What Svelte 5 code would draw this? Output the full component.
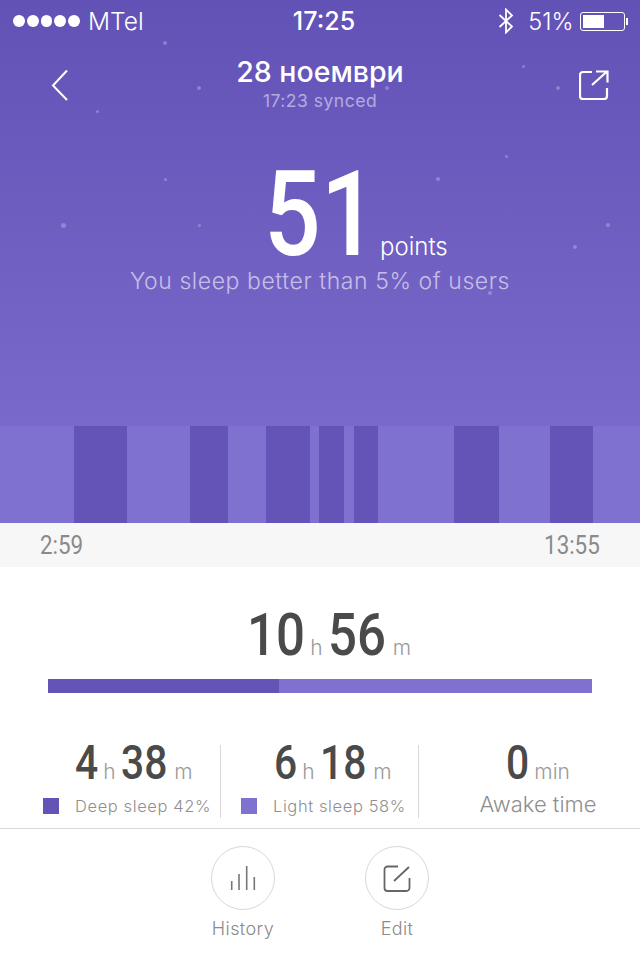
<script>
  const stars = [
    [165, 43, 2], [199, 88, 2], [97, 111, 1.5], [523, 66, 1.5], [558, 88, 2], [387, 88, 2],
    [165, 179, 1.5], [438, 179, 2], [506, 156, 1.5], [63, 225, 2.5], [199, 225, 1.5],
    [608, 225, 2], [575, 247, 2], [490, 293, 2]
  ];

  const segments = [
    ['light', 74], ['deep', 53], ['light', 63], ['deep', 38], ['light', 38], ['deep', 44],
    ['light', 9], ['deep', 25], ['light', 10], ['deep', 24], ['light', 76], ['deep', 45],
    ['light', 51], ['deep', 43], ['light', 47]
  ];
</script>

<div class="page">
  <section class="hero">
    {#each stars as [x, y, r]}
      <span class="star" style="left:{x - r}px;top:{y - r}px;width:{r * 2}px;height:{r * 2}px"></span>
    {/each}

    <div class="status">
      <div class="carrier">
        <span class="signal">
          {#each [1, 2, 3, 4, 5] as dot}
            <i data-dot={dot}></i>
          {/each}
        </span>
        <span>MTel</span>
      </div>
      <div class="clock">17:25</div>
      <div class="power">
        <svg class="bt" width="16" height="26" viewBox="0 0 16 26" fill="none" stroke="#fff" stroke-width="1.8">
          <path d="M1.5 7 14 18.500 8 24.500V1.500l6 6L1.500 19" />
        </svg>
        <span>51%</span>
        <span class="battery"><b></b></span>
        <span class="nub"></span>
      </div>
    </div>

    <header class="nav">
      <svg class="back" width="18" height="32" viewBox="0 0 18 32" fill="none" stroke="#fff" stroke-width="2">
        <path d="M16 1.500 2 16.500 16 31" />
      </svg>
      <div class="title">
        <h1>28 ноември</h1>
        <p>17:23 synced</p>
      </div>
      <svg class="share" width="30" height="30" viewBox="0 0 30 30" fill="none" stroke="#fff" stroke-width="2.2">
        <path d="M13 2H4a3 3 0 0 0-3 3v21a3 3 0 0 0 3 3h21a3 3 0 0 0 3-3v-8" />
        <path d="M13 15 28 1.500M17 1.500h11.500v11" />
      </svg>
    </header>

    <div class="score">
      <span class="points">51</span>
      <span class="unit">points</span>
    </div>
    <p class="rank">You sleep better than 5% of users</p>
  </section>

  <div class="strip">
    {#each segments as [kind, width]}
      <span class={kind} style="width:{width}px"></span>
    {/each}
  </div>

  <div class="times">
    <span class="start">2:59</span>
    <span class="end">13:55</span>
  </div>

  <section class="total">
    <div class="duration big">
      <b class="two">10</b><small>h</small><b class="two">56</b><small>m</small>
    </div>
    <div class="ratio">
      <span class="deep" style="width:42.5%"></span>
      <span class="light" style="width:57.5%"></span>
    </div>
  </section>

  <section class="stats">
    <div class="stat first">
      <div class="duration"><b class="one">4</b><small>h</small><b class="two">38</b><small>m</small></div>
      <div class="legend"><span class="swatch deep"></span>Deep sleep 42%</div>
    </div>
    <div class="stat second">
      <div class="duration"><b class="one">6</b><small>h</small><b class="two">18</b><small>m</small></div>
      <div class="legend"><span class="swatch light"></span>Light sleep 58%</div>
    </div>
    <div class="stat third">
      <div class="duration"><b class="one">0</b><small>min</small></div>
      <div class="awake">Awake time</div>
    </div>
  </section>

  <footer class="actions">
    <div class="action">
      <span class="circle">
        <svg width="26" height="24" viewBox="0 0 26 24" fill="none" stroke="#777" stroke-width="1.600">
          <path d="M1.700 15v9M9 8v16M16.700 0v24M24.300 11v13" />
        </svg>
      </span>
      <span class="label">History</span>
    </div>
    <div class="action">
      <span class="circle">
        <svg width="28" height="28" viewBox="0 0 28 28" fill="none" stroke="#666" stroke-width="1.800">
          <path d="M15 2.500H4.500a3 3 0 0 0-3 3V24a3 3 0 0 0 3 3h19a3 3 0 0 0 3-3V14" />
          <path d="M11 17 26 3" />
        </svg>
      </span>
      <span class="label">Edit</span>
    </div>
  </footer>
</div>

<style>
  :global(body) {
    background: #fff;
    font-family: Inter, Roboto, sans-serif;
  }

  .page {
    width: 640px;
    height: 960px;
    overflow: hidden;
  }

  .hero {
    position: relative;
    height: 426px;
    background: linear-gradient(#6352b6, #7969ca);
    color: #fff;
  }

  .star {
    position: absolute;
    border-radius: 50%;
    background: rgba(255, 255, 255, 0.25);
  }

  .status {
    display: grid;
    grid-template-columns: 1fr auto 1fr;
    align-items: center;
    height: 40px;
    padding: 1px 0 0 8px;
    font-size: 23.500px;
    font-weight: 300;
  }

  .carrier {
    display: flex;
    align-items: center;
    gap: 8px;
    margin-left: 5px;
    font-size: 24.500px;
  }

  .signal {
    display: flex;
    gap: 2px;
  }

  .signal i {
    width: 11.800px;
    height: 11.800px;
    border-radius: 50%;
    background: #fff;
  }

  .clock {
    font-size: 25px;
    font-weight: 500;
  }

  .power {
    display: flex;
    align-items: center;
    justify-content: flex-end;
    padding-right: 12px;
  }

  .bt {
    margin-right: 14px;
  }

  .battery {
    margin-left: 6px;
    width: 45px;
    height: 19px;
    padding: 2px;
    box-sizing: border-box;
    border: 1px solid #fff;
    border-radius: 3px;
  }

  .battery b {
    display: block;
    width: 21px;
    height: 100%;
    background: #fff;
  }

  .nub {
    width: 2.500px;
    height: 7px;
    margin-left: 1px;
    background: #fff;
  }

  .nav {
    display: grid;
    grid-template-columns: 1fr auto 1fr;
    align-items: start;
    padding: 13px 31px 0;
  }

  .back {
    margin: 15px 0 0 20px;
  }

  .share {
    margin-top: 16px;
    justify-self: end;
  }

  .title {
    text-align: center;
  }

  .title h1 {
    margin: 0;
    font-size: 28.500px;
    font-weight: 500;
    line-height: 36px;
  }

  .title p {
    margin: 0;
    font-size: 17.500px;
    line-height: 22px;
    letter-spacing: 0.5px;
    color: rgba(255, 255, 255, 0.5);
  }

  .score {
    display: flex;
    align-items: baseline;
    margin-top: 51px;
    padding-left: 264px;
    height: 104px;
  }

  .points {
    display: inline-block;
    width: 116px;
    font-family: Roboto, sans-serif;
    font-size: 119px;
    font-weight: 500;
    line-height: 104px;
    transform: scaleX(0.84);
    transform-origin: left center;
  }

  .unit {
    font-size: 24px;
    font-weight: 300;
  }

  .rank {
    margin: 0;
    text-align: center;
    font-size: 23px;
    font-weight: 300;
    letter-spacing: 0.57px;
    color: rgba(255, 255, 255, 0.6);
  }

  .strip {
    display: flex;
    height: 97px;
  }

  .deep {
    background: #6554b8;
  }

  .light {
    background: #7f71d0;
  }

  .times {
    display: flex;
    justify-content: space-between;
    align-items: center;
    height: 44px;
    padding: 0 40px;
    background: #f7f7f7;
    color: #8a8a8a;
    font-family: Roboto, sans-serif;
    font-size: 26px;
  }

  .times span {
    display: inline-block;
    transform: scaleX(0.86);
  }

  .start {
    transform-origin: left center;
  }

  .end {
    transform-origin: right center;
  }

  .total {
    padding: 0 48px;
  }

  .duration {
    display: flex;
    align-items: baseline;
    color: #4a4a4a;
    font-family: Roboto, sans-serif;
  }

  /* no condensed face is installed, so the digits get squeezed */
  .duration b {
    display: inline-block;
    font-size: 48px;
    font-weight: 500;
    line-height: 52px;
    transform: scaleX(0.85);
    transform-origin: left center;
  }

  .duration b.one {
    margin-right: -0.084em;
  }

  .duration b.two {
    margin-right: -0.168em;
  }

  .duration small {
    margin: 0 5px;
    font-family: Inter, Roboto, sans-serif;
    font-size: 21px;
    font-weight: 300;
    color: #9a9a9a;
  }

  .duration small:last-child {
    margin: 0 0 0 7px;
  }

  .big {
    justify-content: center;
    height: 60px;
    padding: 38px 0 0 18px;
  }

  .big b {
    font-size: 60px;
    line-height: 60px;
  }

  .ratio {
    display: flex;
    height: 14px;
    margin-top: 14px;
  }

  .stats {
    display: flex;
    margin-top: 52px;
    height: 83px;
    border-bottom: 1px solid #d8d8d8;
  }

  .stat {
    height: 73px;
    box-sizing: border-box;
  }

  .stat .duration {
    margin-top: -8px;
  }

  .first {
    width: 221px;
    padding-left: 43px;
    border-right: 1px solid #d8d8d8;
  }

  .second {
    width: 198px;
    padding-left: 20px;
    border-right: 1px solid #d8d8d8;
  }

  .first .duration {
    padding-left: 32px;
  }

  .second .duration {
    padding-left: 33px;
  }

  .third {
    flex: 1;
    padding-left: 17px;
    text-align: center;
  }

  .third .duration {
    justify-content: center;
  }

  .third .duration small {
    margin-left: 5px;
  }

  .legend {
    display: flex;
    align-items: center;
    font-size: 16.500px;
    font-weight: 300;
    letter-spacing: 0.6px;
    color: #8f8f8f;
    margin-top: 7px;
  }

  .swatch {
    width: 16px;
    height: 16px;
    margin-right: 16px;
  }

  .awake {
    font-size: 22px;
    font-weight: 300;
    color: #8f8f8f;
    margin-top: 2px;
  }

  .actions {
    display: flex;
    justify-content: center;
    gap: 90px;
    padding-top: 17px;
  }

  .action {
    display: flex;
    flex-direction: column;
    align-items: center;
    width: 64px;
    gap: 8px;
  }

  .circle {
    display: flex;
    align-items: center;
    justify-content: center;
    width: 64px;
    height: 64px;
    box-sizing: border-box;
    border: 1px solid #d8d8d8;
    border-radius: 50%;
  }

  .label {
    font-size: 18px;
    font-weight: 300;
    letter-spacing: 0.4px;
    color: #8a8a8a;
  }
</style>
